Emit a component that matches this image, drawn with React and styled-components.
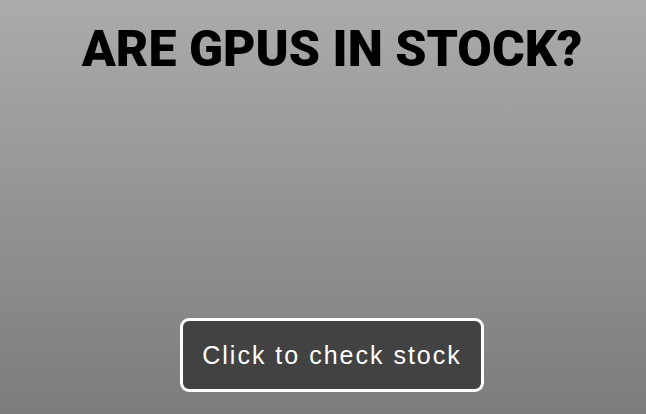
import React from "react";
import styled, { createGlobalStyle } from "styled-components";

const GlobalStyle = createGlobalStyle`
    html, body {
        margin: 0;
        padding: 0;
    }
    body {
        background: linear-gradient(to bottom, #ababab 0%, #7c7c7c 100%);
        min-height: 414px;
        overflow: hidden;
    }
`;

function App() {
    return (
        <>
            <GlobalStyle />
            <StPage>
                <StTitle>ARE GPUS IN STOCK?</StTitle>
                <StButton>Click to check stock</StButton>
            </StPage>
        </>
    );
}

const StPage = styled.div`
    width: 646px;
    height: 414px;
    margin-left: 9px;
    display: flex;
    flex-direction: column;
    align-items: center;
`;

const StTitle = styled.h1`
    margin: 21px 0 0;
    font-family: Roboto, sans-serif;
    font-weight: 900;
    font-size: 50px;
    line-height: 56px;
    color: #000;
`;

const StButton = styled.button`
    margin-top: auto;
    margin-bottom: 22px;
    width: 304px;
    height: 74px;
    border: 3px solid #fff;
    border-radius: 9px;
    background-color: #424242;
    color: #fff;
    font-family: "Liberation Sans", Arial, sans-serif;
    font-size: 25px;
    letter-spacing: 2px;
    padding: 0;
    cursor: pointer;
`;

export default App;
